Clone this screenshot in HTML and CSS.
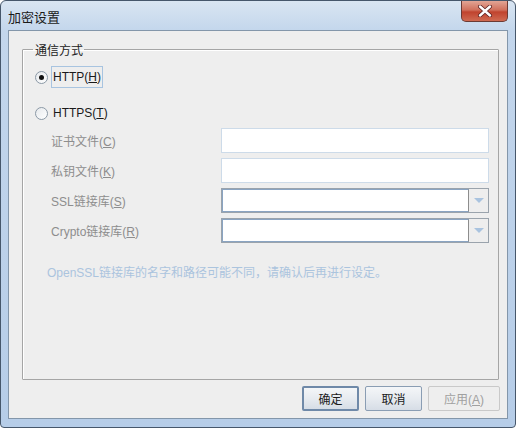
FILE: index.html
```html
<!DOCTYPE html>
<html>
  <head>
    <title>加密设置</title>
    <link rel="stylesheet" href="styles.css">
  </head>
  <body>
    <div class="window">
      <div class="titlebar">
        <span class="title">加密设置</span>
        <div class="close">
          <svg width="16" height="12" viewBox="0 0 16 12">
            <path d="M3 1.5 L13 10.5 M13 1.5 L3 10.5" stroke="#5a2020" stroke-width="4" stroke-linecap="round"/>
            <path d="M3 1.5 L13 10.5 M13 1.5 L3 10.5" stroke="#ffffff" stroke-width="2.4" stroke-linecap="round"/>
          </svg>
        </div>
      </div>
      <div class="client">
        <fieldset class="group">
          <legend>通信方式</legend>
          <div class="radio-row">
            <span class="radio checked"></span>
            <span class="radio-label focused">HTTP(<u>H</u>)</span>
          </div>
          <div class="radio-row">
            <span class="radio"></span>
            <span class="radio-label">HTTPS(<u>T</u>)</span>
          </div>
          <div class="form">
            <label class="field-label">证书文件(<u>C</u>)</label>
            <div class="text-field"></div>
            <label class="field-label">私钥文件(<u>K</u>)</label>
            <div class="text-field"></div>
            <label class="field-label">SSL链接库(<u>S</u>)</label>
            <div class="combo"><div class="combo-input"></div><div class="combo-btn"><span class="arrow"></span></div></div>
            <label class="field-label">Crypto链接库(<u>R</u>)</label>
            <div class="combo"><div class="combo-input"></div><div class="combo-btn"><span class="arrow"></span></div></div>
          </div>
          <p class="note">OpenSSL链接库的名字和路径可能不同，请确认后再进行设定。</p>
        </fieldset>
        <div class="buttons">
          <button class="btn default">确定</button>
          <button class="btn">取消</button>
          <button class="btn disabled">应用(<u>A</u>)</button>
        </div>
      </div>
    </div>
  </body>
</html>
```
FILE: styles.css
```css
body {
  margin: 0;
  font-family: "Liberation Sans", "Noto Sans CJK SC", sans-serif;
  font-size: 12px;
}
.window {
  width: 514px;
  height: 426px;
  border: 1px solid #46576b;
  border-radius: 6px 6px 4px 4px;
  background: linear-gradient(to bottom, #d9e5f2 0px, #c3d6ec 30px, #b6cde8 100%);
  display: flex;
  flex-direction: column;
}
.titlebar {
  height: 29px;
  display: flex;
  align-items: flex-start;
  justify-content: space-between;
}
.title {
  margin: 6px 0 0 7px;
  font-size: 13px;
  color: #1a1a1a;
}
.close {
  width: 45px;
  height: 20px;
  margin-right: 7px;
  border: 1px solid #6b3a34;
  border-top: none;
  border-radius: 0 0 5px 5px;
  background: linear-gradient(to bottom, #e2a595 0%, #d0705c 45%, #c0432e 55%, #cf6a52 100%);
  display: flex;
  align-items: center;
  justify-content: center;
}
.client {
  flex: 1;
  margin: 0 7px 8px 7px;
  border: 1px solid #8396aa;
  background: #eeeeee;
  display: flex;
  flex-direction: column;
}
.group {
  margin: 10px 8px 0 13px;
  padding: 0 0 0 12px;
  height: 337px;
  border: 1px solid #a5a5a5;
  border-radius: 1px;
  box-shadow: inset 1px 1px 0 #ffffff;
}
.group legend {
  padding: 0 1px 0 2px;
  margin-left: -2px;
  color: #222;
  font-size: 12px;
}
.radio-row {
  display: flex;
  align-items: center;
  height: 22px;
  margin-top: 8px;
}
.radio-row + .radio-row {
  margin-top: 14px;
}
.radio {
  width: 11px;
  height: 11px;
  border: 1px solid #8b99a6;
  border-radius: 50%;
  background: linear-gradient(135deg, #e6e9ec, #ffffff);
  display: flex;
  align-items: center;
  justify-content: center;
  margin-right: 3px;
}
.radio.checked::after {
  content: "";
  width: 5px;
  height: 5px;
  border-radius: 50%;
  background: #111;
}
.radio-label {
  color: #1a1a1a;
  font-size: 12px;
  padding: 3px 1px;
  border: 1px solid transparent;
}
.radio-label.focused {
  border-color: #a8c4e0;
}
.form {
  display: grid;
  grid-template-columns: 170px 268px;
  grid-auto-rows: 25px;
  row-gap: 5px;
  margin: 4px 0 0 16px;
  align-items: center;
}
.field-label {
  color: #8d8d8d;
  font-size: 12px;
}
.text-field {
  height: 23px;
  border: 1px solid #cddbe9;
  background: #ffffff;
}
.combo {
  height: 23px;
  display: flex;
  border: 1px solid #9aa3ac;
  background: #ffffff;
}
.combo-input {
  flex: 1;
  border: 1px solid #8aa4c2;
  border-right: 1px solid #8d8d8d;
  background: #ffffff;
}
.combo-btn {
  width: 19px;
  background: #eeeeee;
  display: flex;
  align-items: center;
  justify-content: center;
}
.arrow {
  width: 0;
  height: 0;
  border-left: 5px solid transparent;
  border-right: 5px solid transparent;
  border-top: 5px solid #a9c3df;
}
.note {
  margin: 20px 0 0 12px;
  color: #abc4de;
  font-size: 12px;
}
.buttons {
  display: flex;
  justify-content: flex-end;
  gap: 6px;
  margin: 6px 7px 0 0;
}
.btn {
  font-family: "Liberation Sans", "Noto Sans CJK SC", sans-serif;
  font-size: 12px;
  height: 25px;
  width: 57px;
  border: 1px solid #8a9db3;
  border-radius: 2px;
  background: linear-gradient(to bottom, #f4f6f8 0%, #e7ebf0 50%, #d6dde6 100%);
  color: #1a1a1a;
  padding: 0;
}
.btn.default {
  border: 2px solid #6f89a8;
}
.btn.disabled {
  width: 72px;
  border-color: #c9c9c9;
  background: #eeeeee;
  color: #a0a0a0;
}
```
